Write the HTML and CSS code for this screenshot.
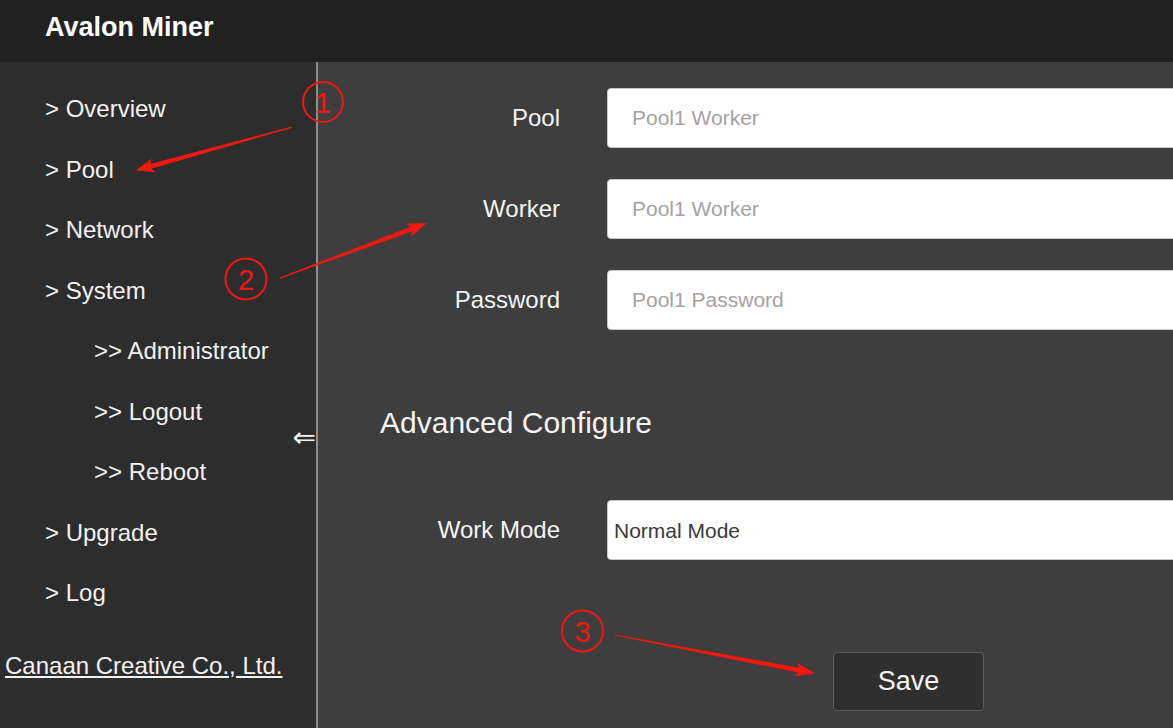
FILE: index.html
```html
<!DOCTYPE html>
<html lang="en">
<head>
<meta charset="utf-8">
<title>Avalon Miner</title>
<link rel="stylesheet" href="styles.css">
</head>
<body>
<header class="topbar">Avalon Miner</header>
<div class="layout">
  <nav class="sidebar">
    <ul class="nav">
      <li class="nav-item">&gt; Overview</li>
      <li class="nav-item">&gt; Pool</li>
      <li class="nav-item">&gt; Network</li>
      <li class="nav-item">&gt; System</li>
      <li class="nav-item sub">&gt;&gt; Administrator</li>
      <li class="nav-item sub">&gt;&gt; Logout</li>
      <li class="nav-item sub">&gt;&gt; Reboot</li>
      <li class="nav-item">&gt; Upgrade</li>
      <li class="nav-item">&gt; Log</li>
    </ul>
    <a class="company" href="#">Canaan Creative Co., Ltd.</a>
    <span class="collapse">&#8656;</span>
  </nav>
  <main class="content">
    <div class="form-rows">
      <div class="row">
        <label class="label">Pool</label>
        <input class="field" type="text" placeholder="Pool1 Worker">
      </div>
      <div class="row">
        <label class="label">Worker</label>
        <input class="field" type="text" placeholder="Pool1 Worker">
      </div>
      <div class="row">
        <label class="label">Password</label>
        <input class="field" type="text" placeholder="Pool1 Password">
      </div>
    </div>
    <h2 class="section-title">Advanced Configure</h2>
    <div class="row mode-row">
      <label class="label">Work Mode</label>
      <select class="field select">
        <option>Normal Mode</option>
      </select>
    </div>
    <div class="actions">
      <button class="save" type="button">Save</button>
    </div>
  </main>
</div>
<svg class="annotations" width="1173" height="728" viewBox="0 0 1173 728">
  <g fill="none" stroke="#f2170f" stroke-width="2">
    <circle cx="323" cy="102" r="20"/>
    <circle cx="246" cy="279" r="20.5"/>
    <circle cx="582.5" cy="631" r="20.5"/>
  </g>
  <g fill="#f2170f" font-family="Liberation Sans, Arial, sans-serif" font-size="29" text-anchor="middle">
    <text x="323" y="112.5">1</text>
    <text x="246" y="290">2</text>
    <text x="582.5" y="642">3</text>
  </g>
  <g fill="#f2170f">
    <g transform="translate(291.5 127.3) rotate(164.5)">
      <polygon points="0,-0.6 146,-2.4 143,-7 162,0 143,7 146,2.4 0,0.6"/>
    </g>
    <g transform="translate(279.5 278.3) rotate(-20.5)">
      <polygon points="0,-0.6 141,-2.4 138,-7 157,0 138,7 141,2.4 0,0.6"/>
    </g>
    <g transform="translate(615 635) rotate(10.84)">
      <polygon points="0,-0.6 187,-2.4 184,-7 203.6,0 184,7 187,2.4 0,0.6"/>
    </g>
  </g>
</svg>
</body>
</html>
```

FILE: styles.css
```css
* {
  box-sizing: border-box;
}

html, body {
  margin: 0;
  padding: 0;
  height: 100%;
}

body {
  font-family: "Liberation Sans", Arial, sans-serif;
  background: #3e3e3e;
  color: #f2f2f2;
  overflow: hidden;
  position: relative;
  display: flex;
  flex-direction: column;
}

.topbar {
  height: 62px;
  flex: none;
  background: #212121;
  color: #ffffff;
  font-weight: bold;
  font-size: 27px;
  line-height: 55px;
  padding-left: 45px;
}

.layout {
  flex: 1;
  display: flex;
  min-height: 0;
}

.sidebar {
  position: relative;
  width: 318px;
  flex: none;
  background: #2d2d2d;
  border-right: 2px solid #8e8e8e;
  padding-top: 17px;
}

.nav {
  list-style: none;
  margin: 0;
  padding: 0;
}

.nav-item {
  height: 60.5px;
  line-height: 60.5px;
  font-size: 24px;
  padding-left: 45px;
  color: #f2f2f2;
  white-space: nowrap;
}

.nav-item.sub {
  padding-left: 94px;
}

.company {
  display: block;
  margin-top: 27px;
  padding-left: 5px;
  font-size: 24px;
  line-height: 30px;
  color: #f2f2f2;
  text-decoration: underline;
  white-space: nowrap;
}

.collapse {
  position: absolute;
  right: 0;
  top: 361px;
  font-family: "DejaVu Sans", sans-serif;
  font-size: 28px;
  line-height: 30px;
  color: #f5f5f5;
}

.content {
  flex: 1;
  padding-top: 26px;
  min-width: 0;
  overflow: hidden;
}

.form-rows {
  display: flex;
  flex-direction: column;
  gap: 31px;
}

.row {
  display: flex;
  align-items: center;
  gap: 47px;
  height: 60px;
}

.label {
  width: 242px;
  flex: none;
  text-align: right;
  font-size: 24px;
  color: #f5f5f5;
}

.field {
  flex: none;
  width: 640px;
  height: 60px;
  background: #ffffff;
  border: 1px solid #c8c8c8;
  border-radius: 4px;
  padding: 0 0 0 24px;
  font-family: "Liberation Sans", Arial, sans-serif;
  font-size: 21px;
  color: #333333;
  outline: none;
}

.field::placeholder {
  color: #a3a3a3;
}

.select {
  appearance: none;
  -webkit-appearance: none;
  padding-left: 6px;
  color: #3a3a3a;
}

.section-title {
  margin: 73px 0 0;
  padding-left: 62px;
  font-size: 30px;
  line-height: 40px;
  font-weight: normal;
  color: #f5f5f5;
}

.mode-row {
  margin-top: 57px;
}

.actions {
  margin-top: 92px;
  padding-left: 515px;
}

.save {
  width: 151px;
  height: 59px;
  background: #2f2f2f;
  border: 1px solid #5c5c5c;
  border-radius: 4px;
  color: #f5f5f5;
  font-family: "Liberation Sans", Arial, sans-serif;
  font-size: 27px;
  padding: 0;
}

.annotations {
  position: absolute;
  left: 0;
  top: 0;
  pointer-events: none;
}
```
